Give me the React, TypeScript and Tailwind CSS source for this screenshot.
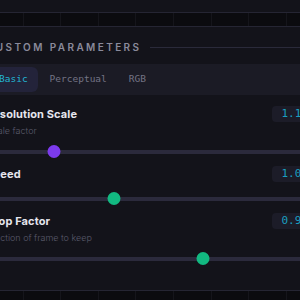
import React from "react";

const params = [
  { name: "Resolution Scale", desc: "Scale factor", value: "1.10", pct: 20.6, color: "bg-[#7c3aed]" },
  { name: "Speed", desc: "", value: "1.00", pct: 38.7, color: "bg-[#12b981]" },
  { name: "Crop Factor", desc: "Fraction of frame to keep", value: "0.90", pct: 65.4, color: "bg-[#12b981]" },
];

const tabs = ["Basic", "Perceptual", "RGB"];

function Ruler() {
  return (
    <div className="flex h-[13px] ml-[-14px] w-[340px] bg-[#0b0b0f]">
      {Array.from({ length: 9 }).map((_, i) => (
        <div key={i} className="w-[37.6px] shrink-0 border-r border-[#15151b]" />
      ))}
    </div>
  );
}

export default function App() {
  return (
    <div className="w-[300px] h-[300px] overflow-hidden bg-[#13131a] flex flex-col" style={{ fontFamily: "Inter, 'Noto Sans', sans-serif" }}>
      <div className="h-[12px] shrink-0" />
      <div className="border-y border-[#252533] shrink-0">
        <Ruler />
      </div>

      <div className="ml-[-14px] w-[332px] flex flex-col pt-[14px] shrink-0">
        {/* header */}
        <div className="flex items-center h-[12px]">
          <span className="text-[10px] leading-[12px] font-semibold tracking-[0.24em] text-[#8a8a9b] uppercase whitespace-nowrap">
            Custom Parameters
          </span>
          <div className="flex-1 h-px bg-[#2a2a3a] ml-[9px]" />
        </div>

        {/* tabs */}
        <div className="mt-[11px] flex gap-[2px] p-[3px] rounded-lg bg-[#1b1b25]" style={{ fontFamily: "'DejaVu Sans Mono', monospace" }}>
          {tabs.map((t, i) => (
            <div
              key={t}
              className={
                i === 0
                  ? "h-[25px] px-[10px] flex items-center rounded-md bg-[#23233a] text-[#22b4d2] text-[9.5px]"
                  : "h-[25px] px-[10px] flex items-center rounded-md text-[#737384] text-[9.5px]"
              }
            >
              {t}
            </div>
          ))}
        </div>

        {/* params */}
        <div className="mt-[11px] flex flex-col gap-[8px]">
          {params.map((p) => (
            <div key={p.name} className="flex flex-col">
              <div className="flex items-center justify-between h-[16px]">
                <span className="text-[11px] font-bold text-[#e6e6ee] tracking-[0.01em]">{p.name}</span>
                <span
                  className="h-[16px] px-[10px] flex items-center rounded bg-[#1c1c28] text-[#1a9ec0] text-[11px]"
                  style={{ fontFamily: "'DejaVu Sans Mono', monospace" }}
                >
                  {p.value}
                </span>
              </div>
              {p.desc && (
                <div className="mt-[3px] ml-[1px] h-[12px] leading-[12px] text-[9px] font-light text-[#5a5a6b] whitespace-nowrap">{p.desc}</div>
              )}
              <div className={p.desc ? "relative mt-[8px] h-[13px] flex items-center" : "relative mt-[10px] h-[13px] flex items-center"}>
                <div className="w-full h-[4px] rounded-full bg-[#2b2a3c]" />
                <div
                  className={`absolute top-0 w-[13px] h-[13px] rounded-full -translate-x-1/2 ${p.color}`}
                  style={{ left: `${p.pct}%` }}
                />
              </div>
            </div>
          ))}
        </div>
      </div>

      <div className="flex-1" />
      <div className="border-t border-[#252533] shrink-0 h-[10px] overflow-hidden">
        <Ruler />
      </div>
    </div>
  );
}
